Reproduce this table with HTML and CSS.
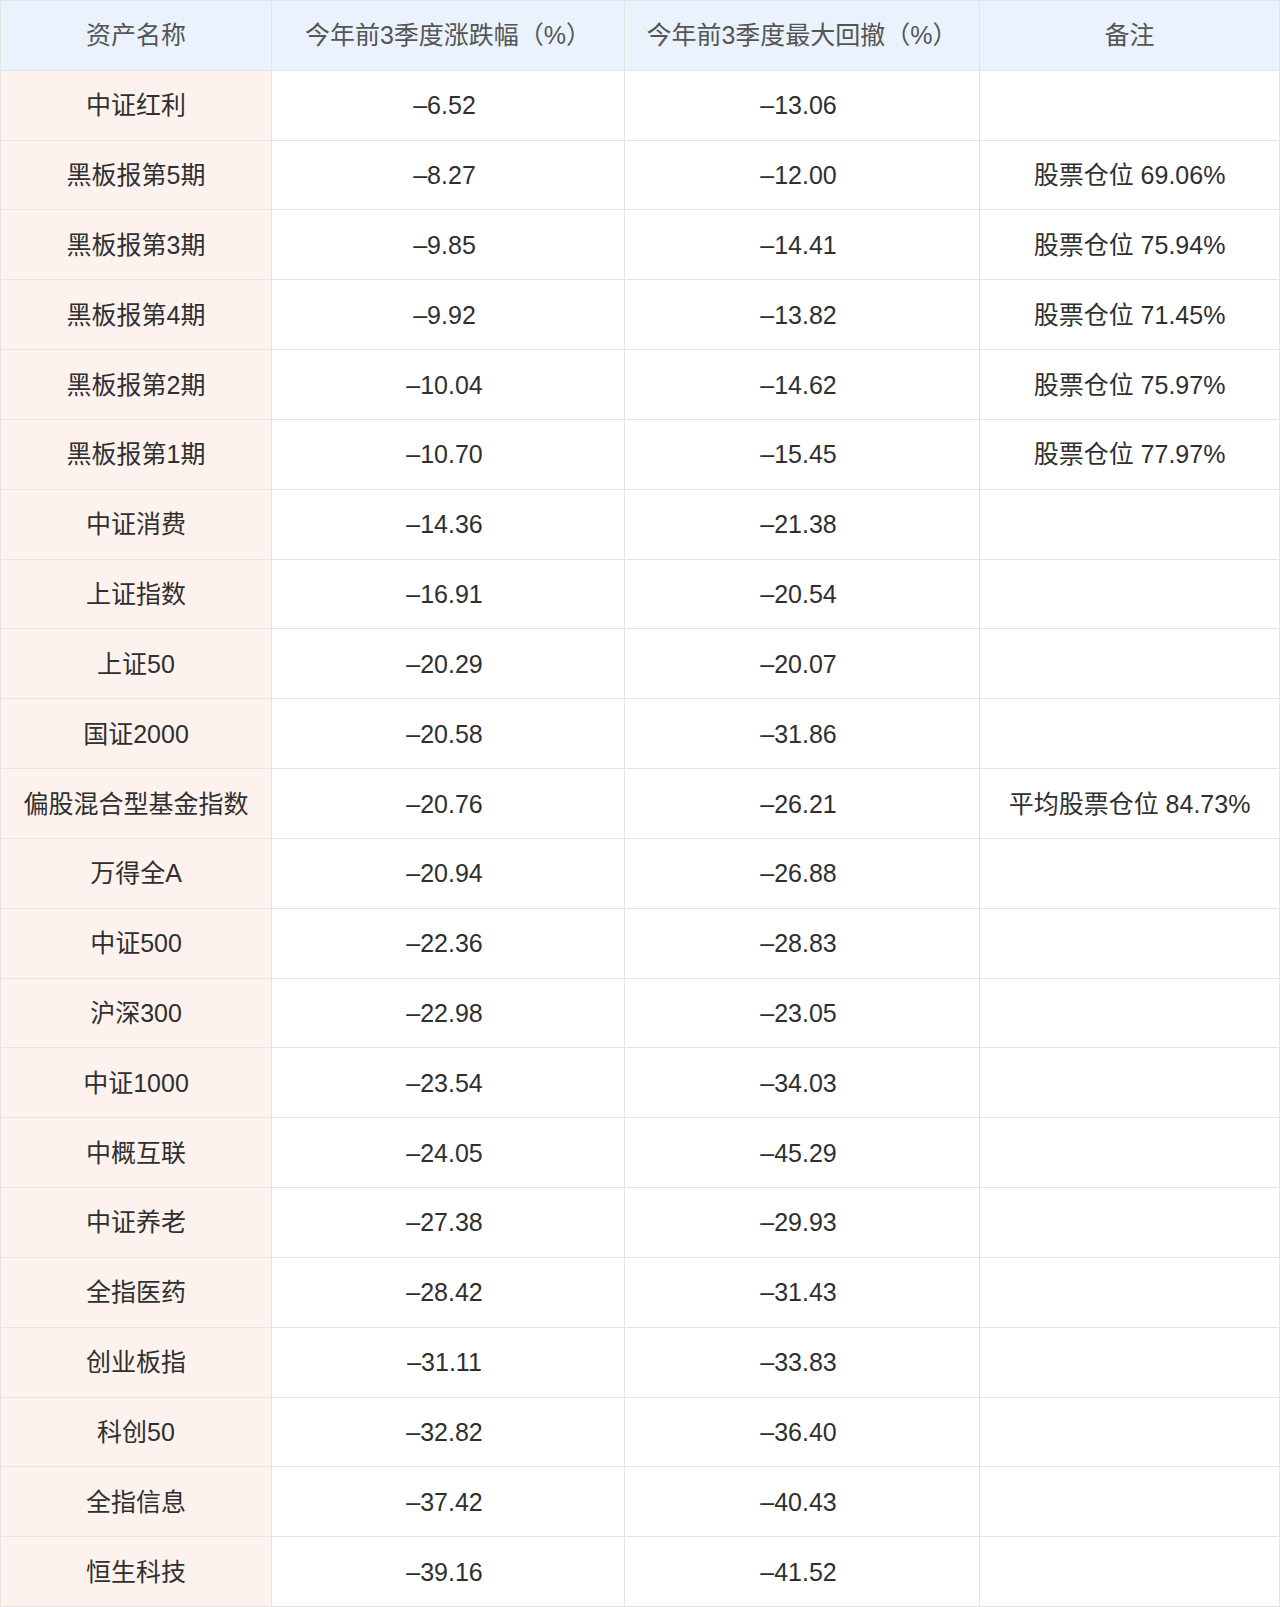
FILE: index.html
```html
<!DOCTYPE html>
<html lang="zh-CN">
<head>
<meta charset="utf-8">
<title>资产表现</title>
<link rel="stylesheet" href="styles.css">
</head>
<body>
<table class="data">
  <colgroup>
    <col class="c1"><col class="c2"><col class="c3"><col class="c4">
  </colgroup>
  <thead>
    <tr><th>资产名称</th><th>今年前3季度涨跌幅（%）</th><th>今年前3季度最大回撤（%）</th><th>备注</th></tr>
  </thead>
  <tbody>
    <tr><td class="name">中证红利</td><td class="num">–6.52</td><td class="num">–13.06</td><td></td></tr>
    <tr><td class="name">黑板报第5期</td><td class="num">–8.27</td><td class="num">–12.00</td><td>股票仓位 69.06%</td></tr>
    <tr><td class="name">黑板报第3期</td><td class="num">–9.85</td><td class="num">–14.41</td><td>股票仓位 75.94%</td></tr>
    <tr><td class="name">黑板报第4期</td><td class="num">–9.92</td><td class="num">–13.82</td><td>股票仓位 71.45%</td></tr>
    <tr><td class="name">黑板报第2期</td><td class="num">–10.04</td><td class="num">–14.62</td><td>股票仓位 75.97%</td></tr>
    <tr><td class="name">黑板报第1期</td><td class="num">–10.70</td><td class="num">–15.45</td><td>股票仓位 77.97%</td></tr>
    <tr><td class="name">中证消费</td><td class="num">–14.36</td><td class="num">–21.38</td><td></td></tr>
    <tr><td class="name">上证指数</td><td class="num">–16.91</td><td class="num">–20.54</td><td></td></tr>
    <tr><td class="name">上证50</td><td class="num">–20.29</td><td class="num">–20.07</td><td></td></tr>
    <tr><td class="name">国证2000</td><td class="num">–20.58</td><td class="num">–31.86</td><td></td></tr>
    <tr><td class="name">偏股混合型基金指数</td><td class="num">–20.76</td><td class="num">–26.21</td><td>平均股票仓位 84.73%</td></tr>
    <tr><td class="name">万得全A</td><td class="num">–20.94</td><td class="num">–26.88</td><td></td></tr>
    <tr><td class="name">中证500</td><td class="num">–22.36</td><td class="num">–28.83</td><td></td></tr>
    <tr><td class="name">沪深300</td><td class="num">–22.98</td><td class="num">–23.05</td><td></td></tr>
    <tr><td class="name">中证1000</td><td class="num">–23.54</td><td class="num">–34.03</td><td></td></tr>
    <tr><td class="name">中概互联</td><td class="num">–24.05</td><td class="num">–45.29</td><td></td></tr>
    <tr><td class="name">中证养老</td><td class="num">–27.38</td><td class="num">–29.93</td><td></td></tr>
    <tr><td class="name">全指医药</td><td class="num">–28.42</td><td class="num">–31.43</td><td></td></tr>
    <tr><td class="name">创业板指</td><td class="num">–31.11</td><td class="num">–33.83</td><td></td></tr>
    <tr><td class="name">科创50</td><td class="num">–32.82</td><td class="num">–36.40</td><td></td></tr>
    <tr><td class="name">全指信息</td><td class="num">–37.42</td><td class="num">–40.43</td><td></td></tr>
    <tr><td class="name">恒生科技</td><td class="num">–39.16</td><td class="num">–41.52</td><td></td></tr>
  </tbody>
</table>
</body>
</html>
```
FILE: styles.css
```css
html, body {
  margin: 0;
  padding: 0;
  background: #ffffff;
}

.data {
  border-collapse: collapse;
  table-layout: fixed;
  width: 1279px;
  font-family: "Liberation Sans", "Noto Sans CJK SC", sans-serif;
  font-size: 25px;
  color: #2f2f2f;
  border: 1px solid #e4e4e4;
}

.c1 { width: 271px; }
.c2 { width: 353px; }
.c3 { width: 355px; }
.c4 { width: 300px; }

.data tr {
  height: 69.83px;
}

.data th,
.data td {
  border: 1px solid #e4e4e4;
  text-align: center;
  vertical-align: middle;
  padding: 0;
  white-space: nowrap;
  line-height: 30px;
}

.data th {
  background: #eaf3fd;
  color: #555555;
  font-weight: normal;
}

.data td.name {
  background: #fdf2ee;
}

.data td.num {
  padding-right: 7px;
}
```
